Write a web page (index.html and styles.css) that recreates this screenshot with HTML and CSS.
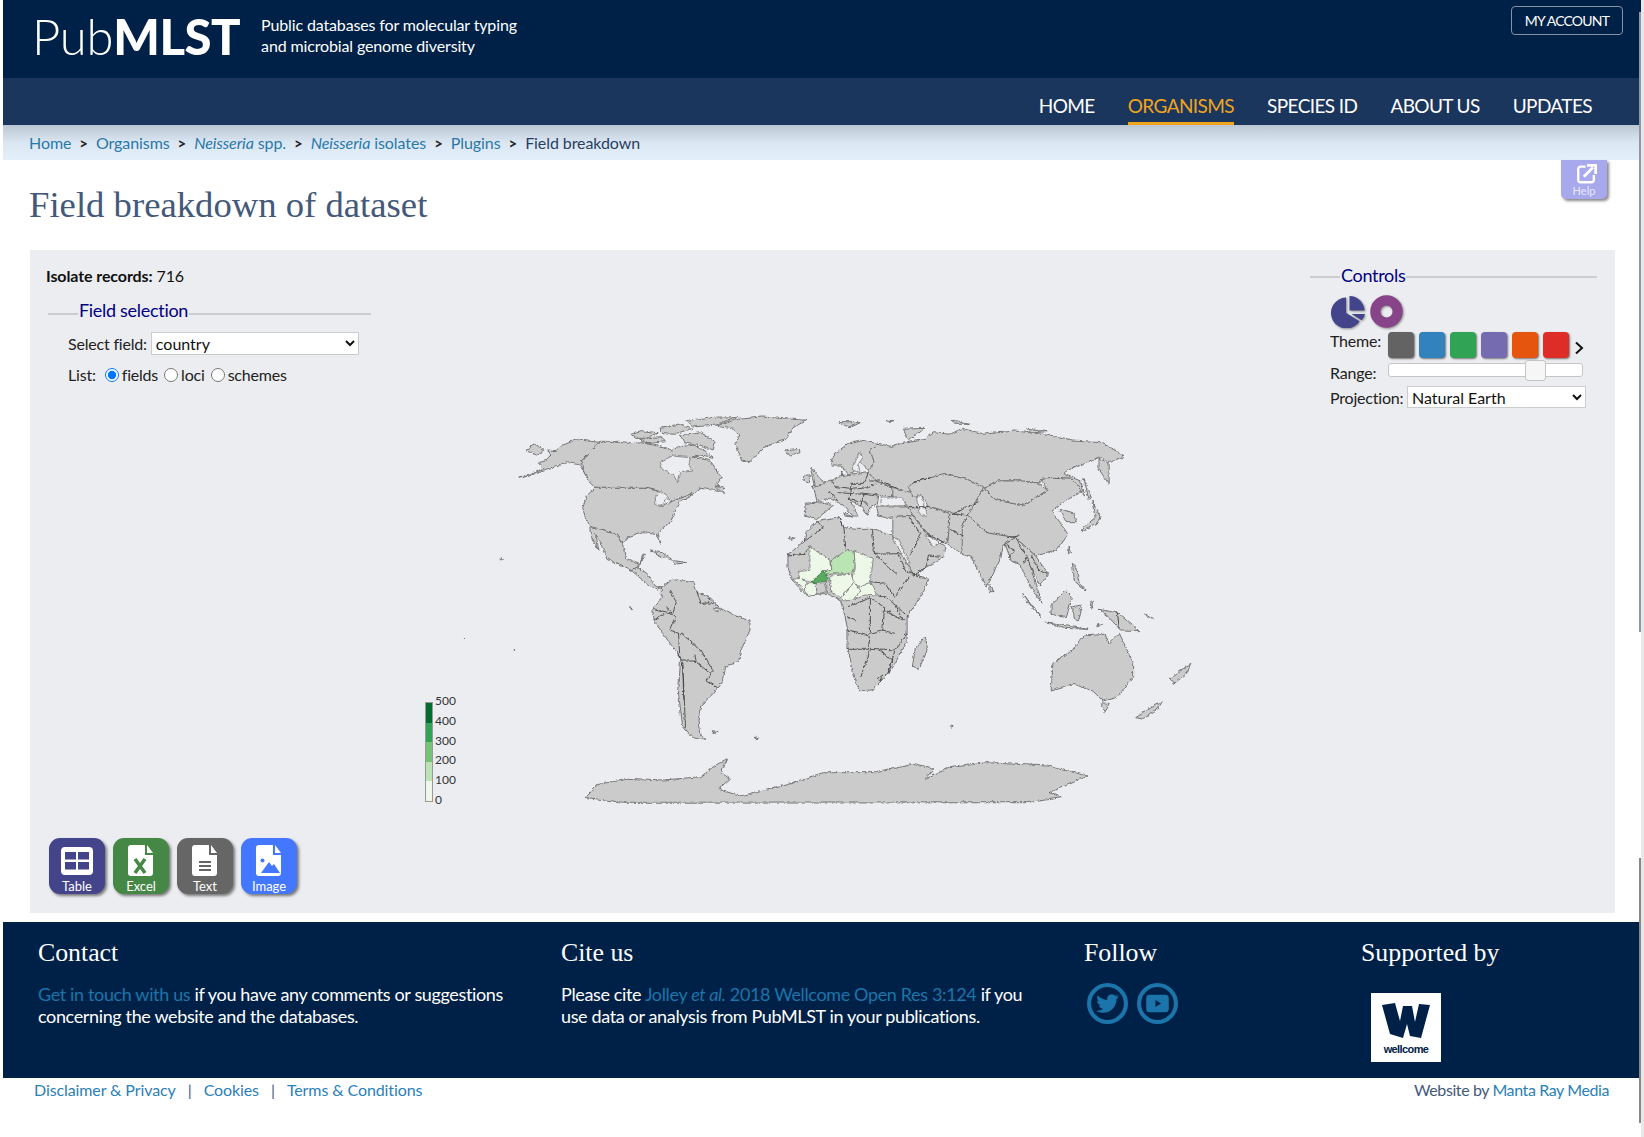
FILE: index.html
```html
<!DOCTYPE html>
<html lang="en">
<head>
<meta charset="utf-8">
<title>Field breakdown of dataset</title>
<link rel="stylesheet" href="styles.css">
</head>
<body>
<div class="page">
  <header class="top">
    <div class="logo"><span class="logo-light">Pub</span><b>MLST</b></div>
    <div class="tagline">Public databases for molecular typing<br>and microbial genome diversity</div>
    <a class="account">MY ACCOUNT</a>
  </header>
  <nav class="nav">
    <a>HOME</a><a class="active">ORGANISMS</a><a>SPECIES ID</a><a>ABOUT US</a><a>UPDATES</a>
  </nav>
  <div class="crumbs">
    <a>Home</a><i class="sep">&gt;</i><a>Organisms</a><i class="sep">&gt;</i><a><em>Neisseria</em> spp.</a><i class="sep">&gt;</i><a><em>Neisseria</em> isolates</a><i class="sep">&gt;</i><a>Plugins</a><i class="sep">&gt;</i><span>Field breakdown</span>
  </div>
  <main class="main">
    <a class="help">
      <svg class="help-icon" viewBox="0 0 24 24"><path d="M11 4H5.500A2.500 2.500 0 0 0 3 6.500V18.500A2.500 2.500 0 0 0 5.500 21H17.500A2.500 2.500 0 0 0 20 18.500V13" fill="none" stroke="#fff" stroke-width="2.600"/><path d="M9 15L19 5M12.500 2.500H22V12" fill="none" stroke="#fff" stroke-width="3"/></svg>
      <span>Help</span>
    </a>
    <h1 class="title">Field breakdown of dataset</h1>
    <section class="panel">
      <div class="panel-top">
        <div class="left">
          <p class="records"><b>Isolate records:</b> 716</p>
          <fieldset class="group field-group">
            <legend>Field selection</legend>
            <div class="row first-row"><label>Select field:</label><select class="sel-field"><option>country</option></select></div>
            <div class="row list-row"><span class="list-label">List:</span>
              <label class="radio"><input type="radio" name="l" checked>fields</label>
              <label class="radio"><input type="radio" name="l">loci</label>
              <label class="radio"><input type="radio" name="l">schemes</label>
            </div>
          </fieldset>
        </div>
        <fieldset class="group controls">
          <legend>Controls</legend>
          <div class="chart-types">
            <svg class="ctype" viewBox="0 0 36 34"><path d="M15.500 2.500A16 16 0 1 0 29.500 27L15.500 18.500Z" fill="#44448a"/><path d="M19 1A15.500 15.500 0 0 1 34.500 16H19Z" fill="#44448a"/><path d="M21 19.500L35 19.500A15 15 0 0 1 31.500 26Z" fill="#44448a"/></svg>
            <svg class="ctype" viewBox="0 0 34 34"><circle cx="17" cy="17" r="11.500" fill="none" stroke="#884488" stroke-width="10.500"/></svg>
          </div>
          <div class="row theme-row"><span class="c-label">Theme:</span>
            <div class="swatches">
              <i class="sw s1"></i><i class="sw s2"></i><i class="sw s3"></i><i class="sw s4"></i><i class="sw s5"></i><i class="sw s6"></i>
            </div>
            <svg class="chev" viewBox="0 0 10 14"><path d="M2 1.500L8 7L2 12.500" fill="none" stroke="#111" stroke-width="2"/></svg>
          </div>
          <div class="row range-row"><span class="c-label">Range:</span><div class="slider"><i class="thumb"></i></div></div>
          <div class="row proj-row"><span class="c-label-p">Projection:</span><select class="sel-proj"><option>Natural Earth</option></select></div>
        </fieldset>
      </div>
      <div class="map-area">
        <div class="legend">
          <div class="legend-bar"><i class="k1"></i><i class="k2"></i><i class="k3"></i><i class="k4"></i><i class="k5"></i></div>
          <div class="legend-labels"><span>500</span><span>400</span><span>300</span><span>200</span><span>100</span><span>0</span></div>
        </div>
        <svg class="map" viewBox="-98 0 1813 1260" preserveAspectRatio="none">
          <defs>
            <filter id="rough" x="-2%" y="-2%" width="104%" height="104%" color-interpolation-filters="sRGB">
              <feTurbulence type="turbulence" baseFrequency="0.07" numOctaves="3" seed="4" result="n"/>
              <feDisplacementMap in="SourceGraphic" in2="n" scale="7" xChannelSelector="R" yChannelSelector="G" result="d"/>
              <feGaussianBlur in="d" stdDeviation="0.9 1"/>
            </filter>
          </defs>
          <g class="geo">
          <g class="land">
            <!-- North America -->
            <path d="M45,232L70,222L105,205L92,185L112,178L122,165L115,150L135,152L150,133L185,116L243,124L198,182L208,196L222,238L210,222L195,192L165,185L135,198L105,210L70,225Z"/>
            <path d="M62,150L85,130L108,150L90,162Z"/>
            <path d="M243,124L290,124L320,128L345,125L385,135L420,150L432,138L470,133L498,148L520,172L490,165L468,168L510,178L542,232L530,250L548,277L522,268L490,262L470,282L440,292L418,302L402,285L385,270L360,262L232,262L218,245L205,210L198,182Z"/>
            <path d="M232,262L360,262L385,272L395,290L380,312L400,316L430,296L470,278L462,292L440,300L425,338L420,360L395,385L385,398L392,430L380,400L350,395L312,410L300,428L285,402L255,390L220,380L205,345L200,320L212,285Z"/>
            <path d="M220,380L255,390L285,402L300,430L308,475L340,490L350,463L354,462L336,500L320,510L290,492L262,475L250,440L232,400L240,450L222,410Z"/>
            <path d="M320,510L336,500L362,525L378,555L395,562L385,568L365,555L345,535Z"/>
            <path d="M318,100L345,92L385,98L360,112L330,112Z"/>
            <path d="M340,115L395,110L405,122L360,128Z"/>
            <path d="M390,82L440,72L470,85L430,100L395,98Z"/>
            <path d="M440,105L490,95L525,125L520,150L490,135L450,125Z"/>
            <path d="M455,62L510,52L580,50L530,72L470,78Z"/>
            <path d="M530,75L580,55L640,48L750,58L718,80L700,115L645,140L610,185L590,180L575,130L585,105L570,85Z"/>
            <path d="M695,150L730,145L735,155L710,165Z"/>
            <path d="M366,450L395,455L418,475L395,470Z"/><path d="M420,478L455,485L425,490Z"/>
            <path d="M525,255L548,262L542,275Z"/>
            <!-- South America -->
            <path d="M395,560L420,535L472,545L480,572L510,590L535,620L565,640L610,660L610,690L590,745L585,780L550,800L545,840L520,880L492,915L485,960L490,1005L502,1018L470,1010L445,975L435,880L440,770L410,720L375,660L372,625L395,590Z"/>
            <!-- Africa -->
            <path d="M750,395L775,362L830,350L840,380L870,385L910,385L960,405L995,490L1030,530L1050,535L1030,585L995,650L995,725L965,790L945,825L910,870L880,872L865,825L850,745L850,690L835,600L800,580L750,585L715,540L703,500L703,465L745,420Z"/>
            <path d="M1040,708L1045,745L1025,805L1008,795L1015,745Z"/>
            <!-- Europe -->
            <path d="M810,195L815,165L850,130L890,118L925,130L905,150L915,185L905,215L880,185L865,195L865,215L850,222L835,195Z"/>
            <path d="M765,255L810,240L830,228L900,215L925,245L970,265L965,287L925,287L922,310L905,322L900,345L885,320L855,298L878,345L862,345L838,312L810,295L780,300L775,305Z"/>
            <path d="M748,310L785,305L815,315L795,335L775,356L745,345Z"/>
            <path d="M760,198L780,230L795,250L770,258L765,225Z"/><path d="M745,225L760,225L755,245L742,240Z"/>
            <path d="M840,335L862,348L842,345Z"/>
            <!-- Russia and Asia -->
            <path d="M925,130L960,140L975,130L1040,115L1060,95L1105,100L1130,85L1180,100L1260,90L1330,100L1400,120L1470,125L1510,150L1528,170L1490,185L1470,170L1440,185L1385,210L1380,220L1420,240L1432,290L1400,235L1355,232L1325,235L1320,250L1280,240L1220,240L1185,262L1140,235L1090,220L1055,230L1010,245L1002,260L1020,270L1010,290L970,265L925,245L900,215L915,185L905,150Z"/>
            <path d="M1465,175L1490,190L1490,250L1465,205Z"/>
            <path d="M1428,235L1448,290L1440,295Z"/>
            <path d="M960,262L1030,285L1030,325L1000,325L960,290Z"/>
            <path d="M920,318L1000,318L1012,345L950,352L925,345Z"/>
            <path d="M1000,260L1010,290L1030,285L1050,320L1100,335L1145,345L1165,300L1185,262L1140,235L1090,220L1055,230L1010,245Z"/>
            <path d="M1000,320L1050,320L1100,340L1100,385L1092,430L1045,400L1010,345Z"/>
            <path d="M960,350L1010,345L1045,400L1090,440L1085,470L1010,525L995,480L960,410Z"/>
            <path d="M1100,340L1145,345L1130,380L1135,410L1130,460L1095,430Z"/>
            <path d="M1185,262L1220,240L1280,240L1320,250L1340,270L1280,315L1210,295Z"/>
            <path d="M1185,262L1210,295L1280,315L1340,270L1325,235L1355,232L1400,235L1425,270L1385,300L1350,330L1390,400L1360,450L1310,465L1260,410L1190,395L1145,345L1165,300Z"/>
            <path d="M1130,380L1145,345L1190,395L1260,410L1230,435L1225,470L1190,560L1155,470L1130,460Z"/>
            <path d="M1235,430L1260,410L1310,465L1342,520L1322,555L1300,500L1325,608L1290,540L1270,490L1250,480Z"/>
            <path d="M1370,325L1405,340L1412,365L1385,365Z"/>
            <path d="M1425,385L1458,350L1450,300L1470,350L1460,370L1425,392Z"/>
            <path d="M1198,550L1208,575L1198,575Z"/><path d="M1392,435L1398,455L1390,458Z"/>
            <path d="M1278,580L1325,650L1305,625Z"/>
            <path d="M1350,610L1385,570L1400,590L1385,650L1350,640Z"/>
            <path d="M1335,665L1440,685L1380,682Z"/>
            <path d="M1400,620L1425,615L1415,660L1405,655Z"/>
            <path d="M1400,490L1410,500L1420,550L1435,572L1405,540Z"/>
            <path d="M1465,625L1510,635L1565,692L1520,690L1490,650Z"/>
            <path d="M1445,600L1452,604L1448,625Z"/><path d="M1465,670L1475,672L1462,680Z"/>
            <!-- Oceania -->
            <path d="M1352,790L1400,750L1430,705L1480,700L1490,730L1515,700L1550,790L1550,830L1510,890L1475,900L1450,870L1405,850L1348,870Z"/>
            <path d="M1470,908L1490,910L1480,935Z"/>
            <path d="M1555,950L1600,915L1620,905L1610,925L1575,955Z"/>
            <path d="M1640,835L1660,815L1690,790L1680,820L1650,850Z"/>
            <path d="M1580,640L1600,655L1585,650Z"/>
            <!-- Antarctica -->
            <path d="M205,1192L240,1150L310,1135L400,1140L490,1130L520,1100L555,1075L540,1115L562,1135L535,1165L590,1187L660,1165L720,1145L800,1115L920,1115L1010,1090L1062,1105L1040,1135L1100,1100L1190,1085L1340,1095L1438,1125L1345,1175L1375,1190L1290,1205L300,1207Z"/>
            <!-- scattered islands -->
            <path d="M520,992L532,994L522,998Z"/><path d="M622,1008L632,1015L625,1016Z"/><path d="M1100,975L1108,977L1104,982Z"/>
            <path d="M828,65L880,65L855,80Z"/><path d="M945,60L965,62L950,65Z"/><path d="M1105,60L1150,70L1115,70Z"/><path d="M1290,85L1340,92L1300,96Z"/><path d="M985,85L1038,82L1000,120Z"/>
            <path d="M318,620L322,626L319,626Z"/><path d="M0,470L6,476L1,480Z"/><path d="M-90,712L-86,714L-88,716Z"/><path d="M32,745L35,747L33,749Z"/>
            <path d="M706,410L722,415L710,418Z"/>
          </g>
          <g class="water">
            <path d="M390,185L422,165L465,170L460,192L470,210L440,215L434,245L425,225L395,205Z"/>
            <path d="M932,291L982,291L995,314L930,316Z"/>
            <path d="M1020,285L1030,285L1046,345L1028,345L1024,320Z"/>
            <path d="M378,292L392,272L410,290L395,315L380,315Z"/>
            <path d="M860,205L880,155L888,168L875,190L880,218Z"/>
            <path d="M960,412L973,414L1003,488L995,488Z"/>
            <path d="M1040,400L1075,425L1060,440Z"/>
            <path d="M522,622L540,624L535,632L526,632Z"/>
          </g>
          <g class="borders">
            <path d="M415,570L430,605L420,640L372,625M430,650L415,690L435,700L445,700L490,750L520,810L505,840L530,860"/>
            <path d="M480,572L490,610L520,608L535,620M510,590L512,610"/>
            <path d="M435,700L438,770L445,780L475,780L495,800L515,820M475,760L478,785M445,780L452,980M445,790L448,900"/>
            <path d="M405,620L430,650M400,640L375,660"/>
            <path d="M775,362L790,380L745,420M830,350L840,380L845,445M910,385L915,460L975,458M915,460L970,520M975,458L990,510L1030,530M1000,530L965,590M945,590L1000,650M960,600L985,655M940,630L990,660M850,690L905,705L900,745L850,745M905,745L965,750L995,700M905,745L890,810L880,830M965,750L950,820M925,745L960,780L945,825M925,835L935,825L930,845Z"/>
            <path d="M703,465L745,460L757,437M850,620L905,590L940,620L935,690L965,700M905,590L905,700L935,690M870,660L850,650M945,630L958,635M925,585L945,590M905,545L945,550L965,590"/>
            <path d="M835,210L840,225M900,215L890,250L860,250M810,240L820,260L860,265L900,260L925,245M825,275L890,280L925,285M860,250L855,295M890,280L880,320M805,270L825,300M850,295L890,305M905,322L885,295M970,265L930,240L905,240"/>
            <path d="M1055,230L1010,245M1000,320L1050,320M1092,430L1045,400M1000,350L1030,400L1000,470M1050,465L1040,500L1010,525M1085,470L1050,465M1100,385L1135,410M1105,340L1170,305M1145,345L1110,340"/>
            <path d="M1260,410L1290,470L1280,490M1300,465L1320,510L1340,520M1290,470L1300,510M1235,430L1260,450L1245,470M1240,410L1270,405"/>
            <path d="M1510,635L1515,685"/>
          </g>
          <g class="data">
            <path class="d-lo" d="M757,437L808,480L810,508L790,512L762,545L735,535L728,512L757,508Z"/>
            <path class="d-mid" d="M810,480L850,448L865,455L868,495L860,520L820,518L795,522L792,512L810,508Z"/>
            <path class="d-lo" d="M865,450L912,475L905,545L880,560L862,540L868,500Z"/>
            <path class="d-lo" d="M808,525L860,520L866,545L835,590L810,575L808,550Z"/>
            <path class="d-lo" d="M866,565L905,545L925,585L890,582L866,597L860,580Z"/>
            <path class="d-lo" d="M835,590L866,545L882,570L866,597L838,600Z"/>
            <path class="d-lo" d="M750,548L772,548L774,582L752,586L745,565Z"/>
            <path class="d-lo" d="M715,535L735,532L750,548L745,568L730,552Z"/>
            <path class="d-hi" d="M762,545L790,512L805,535L792,545L770,548Z"/>
            <path class="d-gr" d="M772,548L792,545L797,575L775,582Z"/>
            <path class="d-gr" d="M797,546L806,540L810,575L800,577Z"/>
          </g>
          </g>
        </svg>
      </div>
      <div class="exports">
        <a class="exp e-table">
          <svg class="exp-icon" viewBox="0 0 34 34"><rect x="1" y="3" width="32" height="28" rx="4" fill="#fff"/><path d="M5 8h11v7.500H5zM18 8h11v7.500H18zM5 18h11v7.500H5zM18 18h11v7.500H18z" fill="#44448a"/></svg>
          <span>Table</span>
        </a>
        <a class="exp e-excel">
          <svg class="exp-icon" viewBox="0 0 34 34"><path d="M7 1H21V11H29V29A3 3 0 0 1 26 32H7A3 3 0 0 1 4 29V4A3 3 0 0 1 7 1Z" fill="#fff"/><path d="M23 1L29 9H23Z" fill="#fff"/><path d="M11 15L21 29M21 15L11 29" stroke="#458845" stroke-width="3.500" fill="none"/></svg>
          <span>Excel</span>
        </a>
        <a class="exp e-text">
          <svg class="exp-icon" viewBox="0 0 34 34"><path d="M7 1H21V11H29V29A3 3 0 0 1 26 32H7A3 3 0 0 1 4 29V4A3 3 0 0 1 7 1Z" fill="#fff"/><path d="M23 1L29 9H23Z" fill="#fff"/><path d="M11 18H23M11 22H23M11 26H23" stroke="#666" stroke-width="2.200" fill="none"/></svg>
          <span>Text</span>
        </a>
        <a class="exp e-image">
          <svg class="exp-icon" viewBox="0 0 34 34"><path d="M7 1H21V11H29V29A3 3 0 0 1 26 32H7A3 3 0 0 1 4 29V4A3 3 0 0 1 7 1Z" fill="#fff"/><path d="M23 1L29 9H23Z" fill="#fff"/><circle cx="10.500" cy="16.500" r="2" fill="#4477ff"/><path d="M9 29L17 18L20 22L22 20L28 29Z" fill="#4477ff"/></svg>
          <span>Image</span>
        </a>
      </div>
    </section>
  </main>
  <footer class="foot">
    <div class="fcol f1">
      <h2>Contact</h2>
      <p><a>Get in touch with us</a> if you have any comments or suggestions concerning the website and the databases.</p>
    </div>
    <div class="fcol f2">
      <h2>Cite us</h2>
      <p>Please cite <a>Jolley <em>et al.</em> 2018 Wellcome Open Res 3:124</a> if you use data or analysis from PubMLST in your publications.</p>
    </div>
    <div class="fcol f3">
      <h2>Follow</h2>
      <div class="social">
        <svg class="soc" viewBox="0 0 40 40"><circle cx="20" cy="20" r="18" fill="none" stroke="#1b75ab" stroke-width="4"/><path d="M31 13.200c-.8.400-1.700.600-2.600.700.900-.600 1.600-1.400 2-2.500-.900.500-1.800.900-2.900 1.100A4.500 4.500 0 0 0 19.800 16.600C16 16.400 12.700 14.600 10.500 11.900c-1.200 2.100-.6 4.700 1.400 6-.7 0-1.400-.2-2-.5 0 2.200 1.500 4 3.600 4.500-.7.200-1.400.2-2 .1.600 1.800 2.200 3 4.200 3.100-1.900 1.500-4.300 2.100-6.700 1.900 2 1.300 4.400 2 6.900 2 8.400 0 13.100-7.100 12.800-13.400.9-.6 1.700-1.400 2.300-2.400Z" fill="#1b75ab"/></svg>
        <svg class="soc" viewBox="0 0 40 40"><circle cx="20" cy="20" r="18" fill="none" stroke="#1b75ab" stroke-width="4"/><path d="M12.500 11.500H27.500A3.500 3.500 0 0 1 31 15V25A3.500 3.500 0 0 1 27.500 28.500H12.500A3.500 3.500 0 0 1 9 25V15A3.500 3.500 0 0 1 12.500 11.500ZM18 16.500V23.500L23.500 20Z" fill="#1b75ab" fill-rule="evenodd"/></svg>
      </div>
    </div>
    <div class="fcol f4">
      <h2>Supported by</h2>
      <div class="wellcome">
        <svg class="w-mark" viewBox="0 0 48 36"><path d="M0 2L13 0L18 18L21 3H30L33 19L37 1L48 2L39 35L28 33L25 21L21 35L8 31Z" fill="#002147"/></svg>
        <span>wellcome</span>
      </div>
    </div>
  </footer>
  <div class="bottom">
    <div class="b-links"><a>Disclaimer &amp; Privacy</a><i>|</i><a>Cookies</a><i>|</i><a>Terms &amp; Conditions</a></div>
    <div class="b-credit">Website by <a>Manta Ray Media</a></div>
  </div>
</div>
<i class="sb sb-track"></i><i class="sb sb-a"></i><i class="sb sb-b"></i>
</body>
</html>
```
FILE: styles.css
```css
*{box-sizing:border-box}
html,body{margin:0;height:1137px;overflow:hidden;background:#fff}
body{font-family:"Lato","Noto Sans",sans-serif;font-size:16px;color:#222;position:relative}
a{text-decoration:none}
i{font-style:normal}
.page{margin-left:3px;width:1638px}
.top{height:78px;background:#002147;position:relative;display:flex;align-items:flex-start;color:#fff}
.logo{font-size:49px;line-height:1;margin:12px 0 0 29px;letter-spacing:-.2px;font-family:"Lato",sans-serif}
.logo-light{font-weight:300}
.logo b{font-weight:900;letter-spacing:-.5px}
.tagline{margin:14px 0 0 21px;font-size:16px;line-height:21px;letter-spacing:-.14px}
.account{position:absolute;right:18px;top:6px;height:29px;width:112px;border:1px solid #8792a3;border-radius:4px;color:#fff;font-size:14px;letter-spacing:-.8px;display:flex;align-items:center;justify-content:center}
.nav{height:47px;background:#1b365d;display:flex;justify-content:flex-end;padding-right:49px;gap:33px;color:#fff;font-size:19px;letter-spacing:-.6px}
.nav a{height:47px;line-height:55px}
.nav .active{color:#f0a41e;border-bottom:3px solid #f0a41e}
.crumbs{height:35px;background:linear-gradient(#bcc7d4,#dbe6f3 50%,#e4effc);padding-left:26px;display:flex;align-items:center;font-size:16px;letter-spacing:-.08px;color:#2a3f5f}
.crumbs a{color:#2a78a8}
.crumbs .sep{margin:0 8px;color:#222;font-weight:700;font-size:15px}
.main{position:relative;padding:0 26px 9px 27px;height:762px}
.help{position:absolute;left:1558px;top:0;width:46px;height:39px;background:#a8a8ec;border-radius:0 0 5px 5px;box-shadow:2px 2px 3px #888;color:#e9e9fb;font-size:11px;text-align:center;display:flex;flex-direction:column;align-items:center;line-height:11px}
.help-icon{width:23px;height:22px;margin:3px 0 0 4px}
.title{margin:0 0 0 -1px;height:90px;padding-top:22px;font-family:"Liberation Serif",serif;font-weight:400;font-size:36.700px;line-height:46px;color:#44597a}
.panel{height:663px;width:1585px;background:#ecedf1;display:flex;flex-direction:column}
.panel-top{height:150px;display:flex;justify-content:space-between;align-items:flex-start}
.left{margin-left:16px;width:325px}
.records{margin:16px 0 0;font-size:16px;line-height:20px;color:#111;letter-spacing:-.1px}
.group{border:0;border-top:2px solid #ccc;margin:0;padding:0;min-width:0}
.group legend{color:#000080;font-size:18px;line-height:22px;padding:0 1px;letter-spacing:-.3px}
.field-group{margin-top:13px;margin-left:2px;width:323px}
.field-group legend{margin-left:30px;padding-bottom:8px}
.row{display:flex;align-items:center}
.field-group .row{margin-left:20px;font-size:16px;letter-spacing:-.2px}
.field-group .first-row{margin-top:3px}
.field-group label{color:#222}
.sel-field{margin-left:4px;width:208px;height:23px;font:16px "Lato",sans-serif;border:1px solid #ccc;background:#fff;border-radius:0;color:#111}
.list-row{margin-top:8px;height:22px}
.list-label{margin-right:7px}
.radio{display:flex;align-items:center;margin-right:4px}
.radio input{margin:1px 3px 0 2px;width:14px;height:14px}
.controls{margin:14px 18px 0 0;width:287px;position:relative}
.controls legend{margin-left:30px;padding-bottom:4px}
.chart-types{display:flex;gap:4px;margin:5px 0 0 21px;height:32px}
.ctype{width:35px;height:33px;filter:drop-shadow(1px 1px 1px #888)}
.ctype+.ctype{width:33px}
.theme-row{margin-left:20px;height:32px;margin-top:3px;align-items:flex-start;letter-spacing:-.2px}
.c-label{width:58px;font-size:16px;line-height:22px;color:#222}
.swatches{display:flex;gap:5px;margin-top:2px}
.sw{width:26px;height:26px;border-radius:4px;box-shadow:1px 1px 2px #777}
.s1{background:#636363}.s2{background:#3182bd}.s3{background:#31a354}.s4{background:#756bb1}.s5{background:#e6550d}.s6{background:#de2d26}
.chev{width:10px;height:14px;margin:11px 0 0 5px}
.range-row{margin-left:20px;height:23px;align-items:flex-start;letter-spacing:-.2px}
.slider{position:relative;width:195px;height:14px;margin-top:1px;background:#fff;border:1px solid #c5c5c5;border-radius:3px}
.thumb{position:absolute;left:136px;top:-4px;width:21px;height:21px;background:#f6f6f6;border:1px solid #c5c5c5;border-radius:3px}
.proj-row{margin-left:20px;height:24px;letter-spacing:-.2px}
.c-label-p{width:77px;font-size:16px;color:#222}
.sel-proj{width:179px;height:22px;font:16px "Lato",sans-serif;border:1px solid #ccc;background:#fff;border-radius:0;color:#111}
.map-area{height:420px;display:flex;align-items:flex-end}
.legend{margin:0 0 16px 395px;width:35px;height:110px;display:flex}
.legend-bar{width:8px;margin-top:8px;height:100px;border:1px solid #999;display:flex;flex-direction:column}
.legend-bar i{flex:1}
.k1{background:#006d2c}.k2{background:#31a354}.k3{background:#74c476}.k4{background:#bae4b3}.k5{background:#edf8e9}
.legend-labels{margin-left:2px;font-size:12px;line-height:14px;color:#333;display:flex;flex-direction:column;justify-content:space-between;height:113px}
.map{width:740px;height:420px;flex:none;margin-left:0}
.geo{filter:url(#rough)}
.land path{fill:#cbcbcb;stroke:#6a6a6a;stroke-width:.9;vector-effect:non-scaling-stroke}
.water path{fill:#ecedf1;stroke:#777;stroke-width:.8;vector-effect:non-scaling-stroke}
.borders path{fill:none;stroke:#444;stroke-width:.9;vector-effect:non-scaling-stroke}
.data path{stroke:#777;stroke-width:.8;vector-effect:non-scaling-stroke}
.data .d-lo{fill:#edf8e9}.data .d-mid{fill:#bae4b3}.data .d-hi{fill:#56ab5e;stroke:#3d7a45}.data .d-gr{fill:#cbcbcb}
.exports{display:flex;gap:8px;margin:18px 0 0 19px}
.exp{width:56px;height:56px;border-radius:11px;box-shadow:2px 2px 3px #777;color:#fff;font-size:13px;display:flex;flex-direction:column;align-items:center;line-height:14px;padding-top:6px}
.exp-icon{width:34px;height:34px;margin-bottom:1px}
.e-table{background:#44448a}.e-excel{background:#458845}.e-text{background:#666}.e-image{background:#4477ff}
.foot{height:156px;background:#002147;color:#fff;position:relative;display:flex;padding-top:15px;font-size:18px;line-height:22px;letter-spacing:-.36px}
.fcol h2{margin:0;font:400 25.800px/32px "Liberation Serif",serif;letter-spacing:0}
.fcol p{margin:14px 0 0}
.fcol a{color:#1b75ab}
.f1{margin-left:35px;width:523px}.f1 p{width:480px}
.f2{width:523px}.f2 p{width:470px}
.f3{width:277px}
.f4{width:250px}
.social{display:flex;gap:9px;margin:14px 0 0 3px}
.soc{width:41px;height:41px}
.wellcome{width:70px;height:69px;margin:24px 0 0 10px;background:#fff;display:flex;flex-direction:column;align-items:center;color:#002147;padding-top:10px}
.w-mark{width:48px;height:36px}
.wellcome span{font:700 11px/14px "Liberation Sans",sans-serif;letter-spacing:-.6px;margin-top:3px}
.bottom{display:flex;justify-content:space-between;padding:2px 32px 0 31px;font-size:16px;line-height:20px;letter-spacing:-.1px;color:#44597a}
.bottom a{color:#2a80b9}
.b-links i{margin:0 12px;color:#44597a}
.b-credit{letter-spacing:-.4px}
.sb{position:absolute;display:block}
.sb-track{left:1641px;top:0;width:3px;height:1137px;background:#e8e8e8}
.sb-a{left:1639px;top:12px;width:2px;height:620px;background:#8d98a8}
.sb-b{left:1639px;top:858px;width:2px;height:265px;background:#888}
```
